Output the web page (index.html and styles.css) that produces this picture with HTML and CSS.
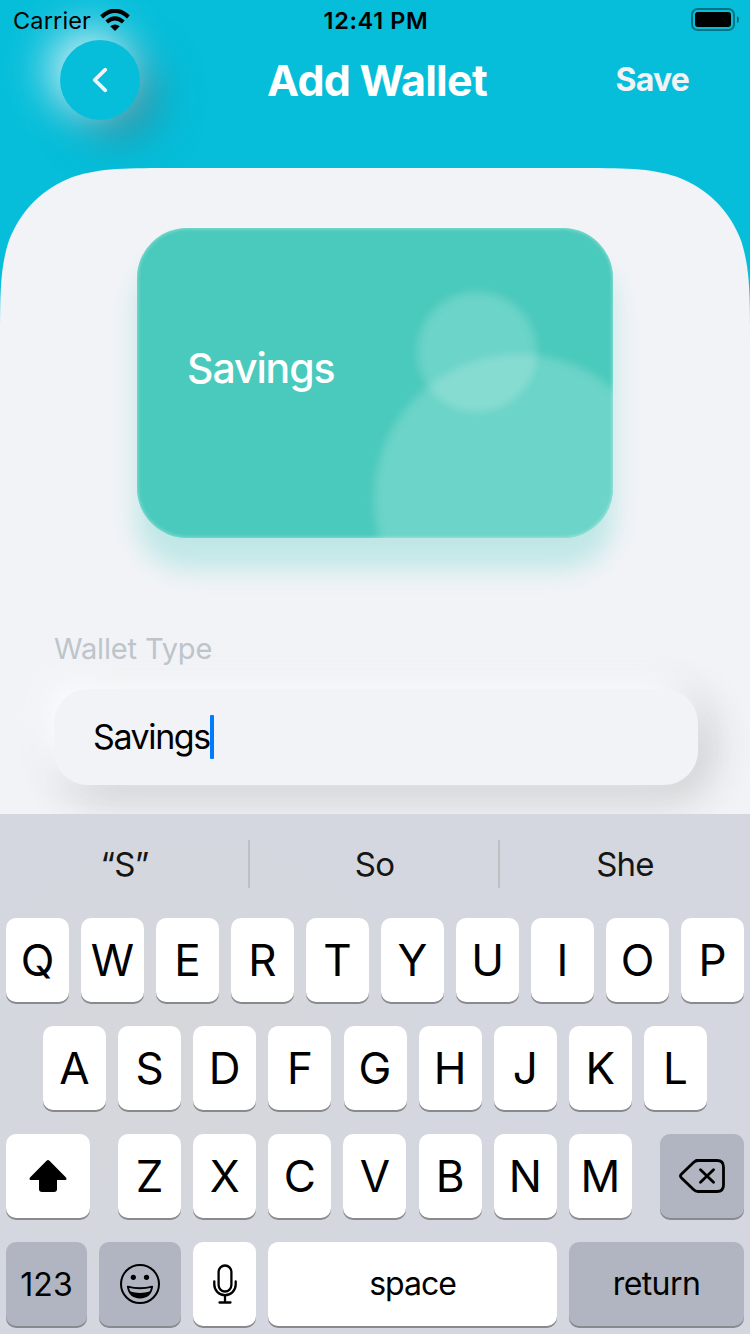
FILE: index.html
```html
<!DOCTYPE html>
<html lang="en">
<head>
<meta charset="utf-8">
<title>Add Wallet</title>
<link rel="stylesheet" href="styles.css">
</head>
<body>
<div class="screen">
  <div class="status">
    <div class="status-left">
      <span class="carrier">Carrier</span>
      <svg class="wifi" width="30" height="22" viewBox="0 0 30 22">
        <path d="M1.6 7.9 Q15 -4.3 28.400 7.900" fill="none" stroke="#000" stroke-width="4.200"/>
        <path d="M6.700 13 Q15 5.700 23.300 13" fill="none" stroke="#000" stroke-width="4"/>
        <path d="M15 22 L10.300 17.300 Q15 13.700 19.700 17.300Z"/>
      </svg>
    </div>
    <span class="clock">12:41 PM</span>
    <div class="status-right">
      <svg width="48" height="23" viewBox="0 0 48 23">
        <rect x="1" y="1" width="42" height="21" rx="5.500" fill="none" stroke="#000" stroke-opacity=".4" stroke-width="2"/>
        <rect x="4" y="4" width="36" height="15" rx="3"/>
        <path d="M46 8 Q48 9 48 11.500 Q48 14 46 15Z" opacity=".5"/>
      </svg>
    </div>
  </div>
  <header class="header">
    <div class="back">
      <svg width="80" height="80" viewBox="0 0 80 80"><path d="M45.300 29.700 L34.700 40 L45.300 50.300" fill="none" stroke="#f1f3f7" stroke-width="3.800" stroke-linecap="round" stroke-linejoin="round"/></svg>
    </div>
    <h1 class="title">Add Wallet</h1>
    <span class="save">Save</span>
  </header>
  <main class="panel">
    <svg class="panel-shape" width="750" height="646" viewBox="0 0 750 646">
      <path d="M0 646 V177.300 C0 126.300 0 100.700 8.700 73.300 C19.600 43.200 43.200 19.600 73.300 8.700 C100.700 0 126.300 0 177.300 0 H572.700 C623.700 0 649.300 0 676.700 8.700 C706.800 19.600 730.400 43.200 741.300 73.300 C750 100.700 750 126.300 750 177.300 V646Z" fill="#f1f3f7"/>
    </svg>
    <div class="card">
      <i class="bubble bubble-large"></i>
      <i class="bubble bubble-small"></i>
      <span class="card-name">Savings</span>
    </div>
    <div class="label">Wallet Type</div>
    <div class="field"><span class="field-text">Savings</span><i class="caret"></i></div>
  </main>
  <section class="keyboard">
    <div class="suggestions">
      <span>“S”</span><span>So</span><span>She</span>
    </div>
    <div class="keys">
      <div class="row"><b class="key">Q</b><b class="key">W</b><b class="key">E</b><b class="key">R</b><b class="key">T</b><b class="key">Y</b><b class="key">U</b><b class="key">I</b><b class="key">O</b><b class="key">P</b></div>
      <div class="row row-home"><b class="key">A</b><b class="key">S</b><b class="key">D</b><b class="key">F</b><b class="key">G</b><b class="key">H</b><b class="key">J</b><b class="key">K</b><b class="key">L</b></div>
      <div class="row">
        <b class="key wide"><svg width="38" height="32" viewBox="0 0 38 32"><path d="M17.800 .6 Q19 -.4 20.200 .6 L37 17.400 Q38.500 20 36 20 H28 V29 Q28 32 25 32 H13 Q10 32 10 29 V20 H2 Q-.5 20 1 17.400Z"/></svg></b>
        <div class="row letters"><b class="key">Z</b><b class="key">X</b><b class="key">C</b><b class="key">V</b><b class="key">B</b><b class="key">N</b><b class="key">M</b></div>
        <b class="key wide dark"><svg width="46" height="34" viewBox="0 0 46 34"><path d="M17.500 1.500 H38 Q44.500 1.500 44.500 8 V26 Q44.500 32.500 38 32.500 H19 Q16.500 32.500 14.500 30.500 L2.300 18.700 Q.7 17 2.300 15.300 L14.500 3.500 Q16.500 1.500 19 1.500Z M21.500 10.800 L34.500 23.200 M34.500 10.800 L21.500 23.200" fill="none" stroke="#000" stroke-width="2.800" stroke-linecap="round" stroke-linejoin="round"/></svg></b>
      </div>
      <div class="row">
        <b class="key numbers dark">123</b>
        <b class="key emoji dark"><svg width="40" height="40" viewBox="0 0 40 40"><circle cx="20" cy="20" r="19" fill="none" stroke="#000" stroke-width="2"/><circle cx="13.300" cy="13.300" r="2.600"/><circle cx="26.500" cy="13.300" r="2.600"/><path d="M7.800 22.700 Q20 25.800 32.200 22.700 Q30.500 33.500 20 33.500 Q9.500 33.500 7.800 22.700Z" fill="none" stroke="#000" stroke-width="1.800" stroke-linejoin="round"/><path d="M9.500 27.300 Q20 30.800 30.500 27.300 Q27.500 33.500 20 33.500 Q12.500 33.500 9.500 27.300Z"/></svg></b>
        <b class="key"><svg width="24" height="40" viewBox="0 0 24 40"><g fill="none" stroke="#000" stroke-width="2.300" stroke-linecap="round"><rect x="5.600" y="1.500" width="12.800" height="26" rx="6.400"/><path d="M1.300 17.500 V20.500 A10.700 10.700 0 0 0 22.700 20.500 V17.500 M12 31.500 V38 M6.500 38.500 H17.500"/></g></svg></b>
        <b class="key space">space</b>
        <b class="key return dark">return</b>
      </div>
    </div>
  </section>
</div>
</body>
</html>
```
FILE: styles.css
```css
* { box-sizing: border-box; }
body { margin: 0; font-family: Inter, "Liberation Sans", sans-serif; color: #000; }
svg { display: block; }
.screen { width: 750px; height: 1334px; overflow: hidden; background: #06beda; display: flex; flex-direction: column; }

.status { height: 40px; padding: 0 11px 0 13px; display: grid; grid-template-columns: 1fr auto 1fr; align-items: center; position: relative; z-index: 2; }
.status-left { display: flex; gap: 9px; align-items: center; font-size: 23.500px; letter-spacing: .15px; }
.status-right { display: flex; justify-content: flex-end; padding-bottom: 1px; }
.clock { font-size: 23.500px; font-weight: 600; letter-spacing: .65px; padding-top: 1px; }

.header { height: 128px; padding: 0 61px 0 60px; display: grid; grid-template-columns: 1fr auto 1fr; align-items: start; line-height: 80px; }
.back { width: 80px; height: 80px; border-radius: 50%; background: #06beda; box-shadow: -10px -10px 46px rgba(255,255,255,.85), 18px 18px 44px rgba(75,100,110,.5); }
.title { margin: 0; padding-left: 5px; color: #fff; font-size: 43px; font-weight: 700; letter-spacing: -.75px; }
.save { text-align: right; color: #f1f3f7; font-size: 32px; font-weight: 700; letter-spacing: -.8px; }

.panel { height: 646px; padding: 60px 52px 0 54px; position: relative; z-index: 1; overflow: hidden; }
.panel-shape { position: absolute; left: 0; top: 0; z-index: -1; }
.card { width: 476px; height: 310px; margin-left: 83px; padding: 0 50px; border-radius: 50px; position: relative; overflow: hidden; background: #4acabc; line-height: 281px; box-shadow: 0 30px 24px rgba(74,202,188,.29); }
.card::after { content: ""; position: absolute; inset: 0; border-radius: 50px; box-shadow: inset 0 0 4px rgba(255,255,255,.5); }
.bubble { position: absolute; border-radius: 50%; background: rgba(255,255,255,.19); filter: blur(4px); }
.bubble-large { left: 237px; top: 126px; width: 290px; height: 290px; }
.bubble-small { left: 280px; top: 64px; width: 120px; height: 120px; }
.card-name { position: relative; color: #fff; font-size: 41px; font-weight: 500; letter-spacing: -1.1px; }
.label { margin-top: 91px; height: 40px; line-height: 40px; font-size: 29px; letter-spacing: -.15px; color: #bdc5ca; position: relative; z-index: 1; }
.field { margin-top: 20px; height: 96px; padding-left: 39px; border-radius: 34px; background: #f1f3f7; display: flex; align-items: center; box-shadow: -10px -10px 32px rgba(255,255,255,.95), 10px 10px 44px rgba(50,50,38,.24); }
.field-text { font-size: 34px; letter-spacing: -1.4px; line-height: 40px; }
.caret { width: 4px; height: 44px; border-radius: 1px; background: #007aff; }

.keyboard { height: 520px; background: radial-gradient(circle at 190px 250px, #d6d7db 0, rgba(214,215,219,0) 240px), #d4d7df; }
.suggestions { height: 104px; padding: 26px 0 30px; display: grid; grid-template-columns: 250px 250px 250px; text-align: center; font-size: 33px; line-height: 49px; letter-spacing: -.8px; color: #151515; }
.suggestions span { height: 48px; padding-left: 1px; border-right: 2px solid #bfc0c4; }
.suggestions span:last-child { padding: 0; border: 0; }
.keys { padding: 0 6px; display: flex; flex-direction: column; gap: 24px; }
.row { display: flex; justify-content: space-between; }
.row-home { padding: 0 37px; }
.letters { width: 514px; }
.key { width: 63px; height: 84px; border-radius: 10px; background: #fff; box-shadow: 0 2px 0 #898a8d; display: flex; align-items: center; justify-content: center; font-size: 44px; font-weight: 370; }
.wide { width: 84px; }
.dark { background: #b1b5c1; }
.numbers { width: 81px; font-size: 32px; }
.emoji { width: 82px; }
.space { width: 289px; font-size: 32px; letter-spacing: -1px; padding-bottom: 2px; }
.return { width: 175px; font-size: 32px; letter-spacing: -.6px; padding-bottom: 2px; }
```
